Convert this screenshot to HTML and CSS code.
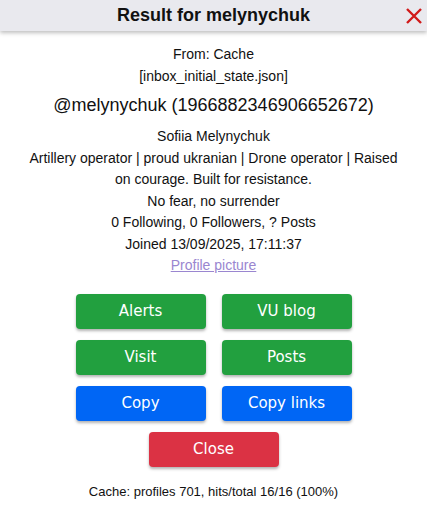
FILE: index.html
```html
<!DOCTYPE html>
<html lang="en">

<head>
    <meta charset="UTF-8">
    <meta name="viewport" content="width=device-width, initial-scale=1.0">
    <title>Result for melynychuk</title>
    <link rel="stylesheet" href="styles.css">
</head>

<body>
    <div class="dialog">
        <div class="dialog-header">
            <h1>Result for melynychuk</h1>
            <button class="close-x" aria-label="Close">
                <svg width="20" height="20" viewBox="0 0 20 20">
                    <path d="M3 3 L17 17 M17 3 L3 17" stroke="#d11a1a" stroke-width="2.4" fill="none" />
                </svg>
            </button>
        </div>

        <div class="dialog-body">
            <p>From: Cache</p>
            <p>[inbox_initial_state.json]</p>
            <h2>@melynychuk (1966882346906652672)</h2>
            <p>Sofiia Melynychuk</p>
            <p class="bio">Artillery operator | proud ukranian | Drone operator | Raised on courage. Built for resistance.</p>
            <p>No fear, no surrender</p>
            <p>0 Following, 0 Followers, ? Posts</p>
            <p>Joined 13/09/2025, 17:11:37</p>
            <p><a href="#" class="pic-link">Profile picture</a></p>

            <div class="actions">
                <button class="btn green">Alerts</button>
                <button class="btn green">VU blog</button>
                <button class="btn green">Visit</button>
                <button class="btn green">Posts</button>
                <button class="btn blue">Copy</button>
                <button class="btn blue">Copy links</button>
                <button class="btn red wide">Close</button>
            </div>

            <p class="cache-info">Cache: profiles 701, hits/total 16/16 (100%)</p>
        </div>
    </div>
</body>

</html>
```

FILE: styles.css
```css
body,
html {
    margin: 0;
    padding: 0;
    width: 100%;
    height: 100%;
    background-color: white;
    font-family: "Liberation Sans", Arial, sans-serif;
    color: #111;
}

.dialog {
    width: 100%;
}

.dialog-header {
    height: 31px;
    background-color: #e9e9ee;
    box-shadow: 0 2px 4px rgba(0, 0, 0, 0.25);
    display: flex;
    justify-content: center;
    align-items: center;
    position: relative;
}

.dialog-header h1 {
    margin: 0;
    font-size: 18px;
    font-weight: bold;
    color: #111;
}

.close-x {
    position: absolute;
    right: 3px;
    top: 6px;
    padding: 0;
    border: none;
    background: none;
    cursor: pointer;
    line-height: 0;
}

.dialog-body {
    padding-top: 13px;
    text-align: center;
}

.dialog-body p {
    margin: 0;
    font-size: 14px;
    line-height: 21.5px;
}

.dialog-body h2 {
    margin: 6px 0 9px;
    font-size: 18px;
    font-weight: normal;
    line-height: 24px;
}

.bio {
    padding: 0 20px;
}

.pic-link {
    color: #9a86d0;
}

.actions {
    display: grid;
    grid-template-columns: 130px 130px;
    justify-content: center;
    column-gap: 16px;
    row-gap: 11px;
    margin-top: 17px;
}

.btn {
    height: 35px;
    border: none;
    border-radius: 4px;
    color: white;
    font-family: "DejaVu Sans", Tahoma, sans-serif;
    font-size: 15px;
    box-shadow: 0 2px 3px rgba(0, 0, 0, 0.3);
    cursor: pointer;
}

.btn.green {
    background-color: #22a03f;
}

.btn.blue {
    background-color: #0066f5;
}

.btn.red {
    background-color: #db3244;
}

.btn.wide {
    grid-column: 1 / 3;
    justify-self: center;
    width: 130px;
}

.dialog-body .cache-info {
    font-size: 13px;
    line-height: 20px;
    margin-top: 15px;
}
```
